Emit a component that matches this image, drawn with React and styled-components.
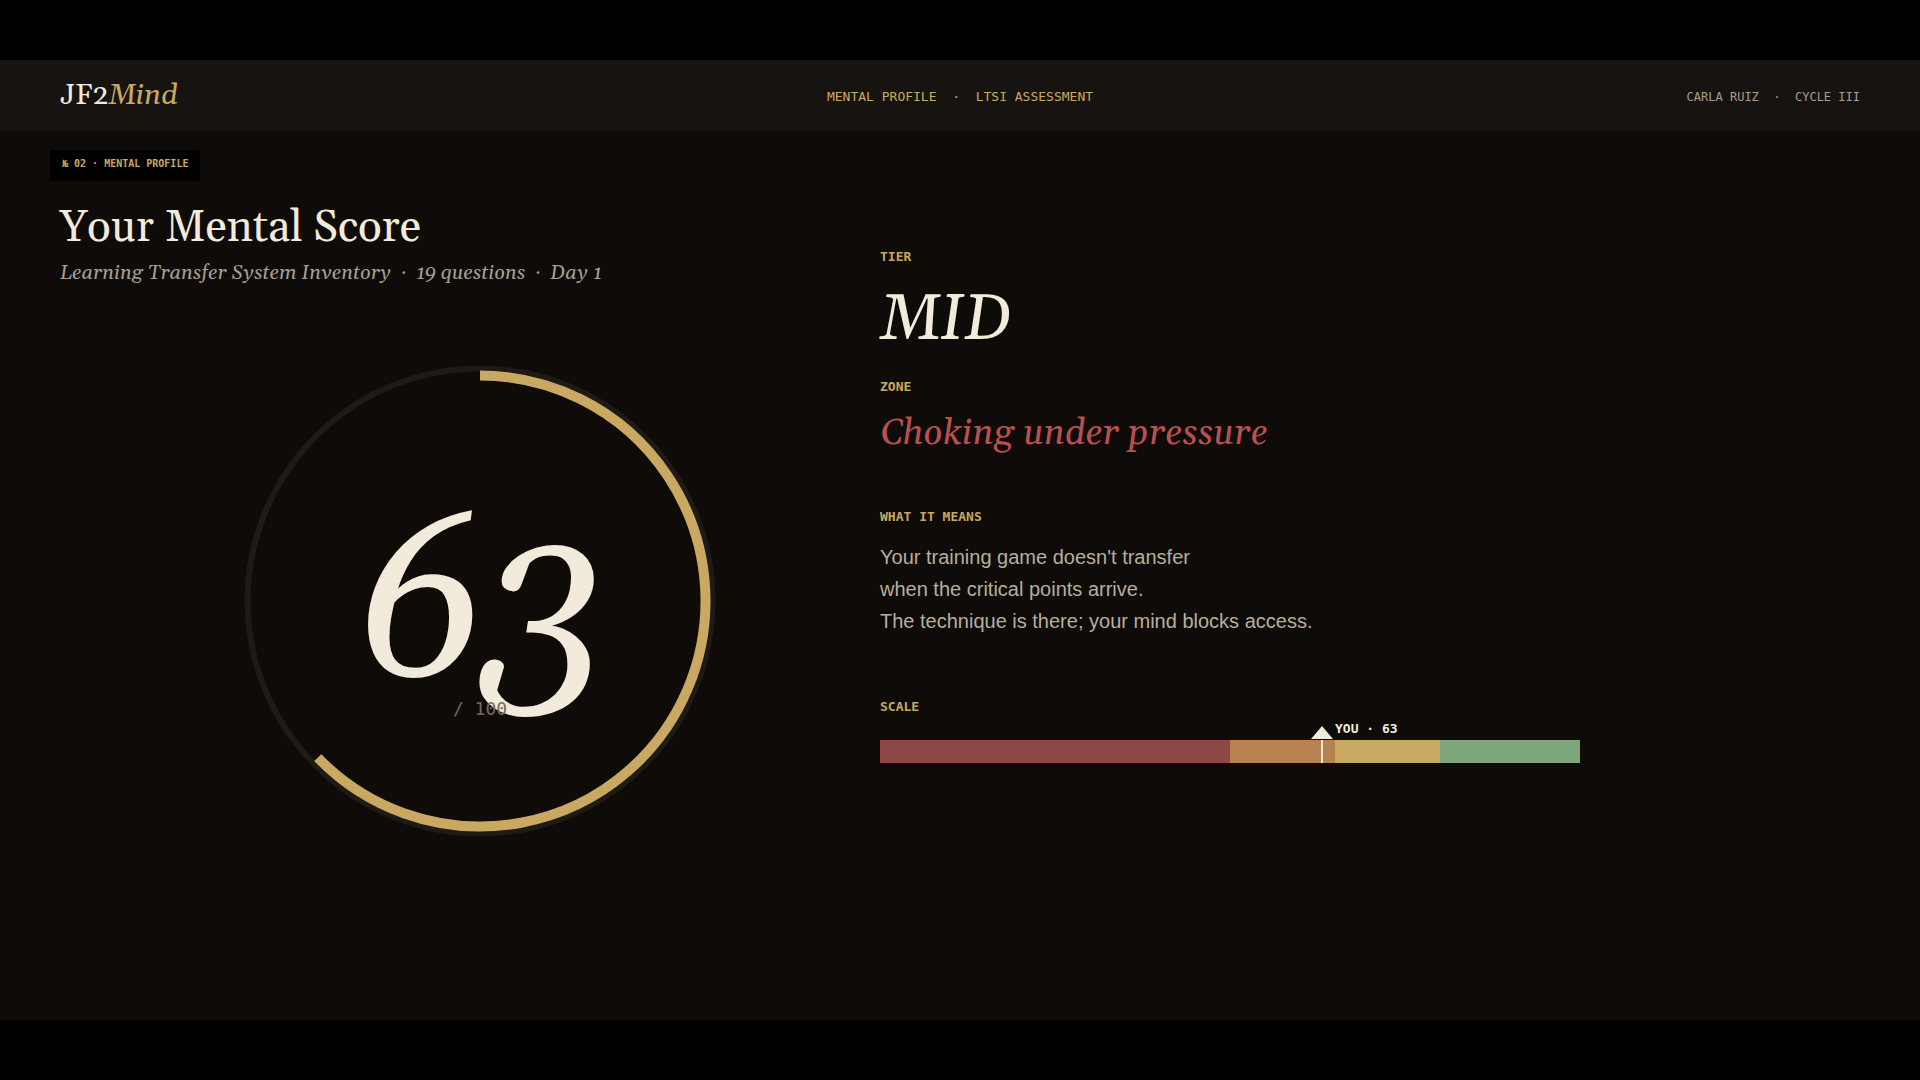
import styled, { createGlobalStyle } from "styled-components";

const SERIF = `Georgia, Gelasio, "Liberation Serif", serif`;
const MONO = `"DejaVu Sans Mono", "Liberation Mono", monospace`;
const SANS = `"Liberation Sans", Arial, sans-serif`;

const SCORE = 63;

// score bands, as a share of 100
const BANDS = [
  { name: "low", share: 50, color: "#8c4747" },
  { name: "mid", share: 15, color: "#b58250" },
  { name: "high", share: 15, color: "#c9a961" },
  { name: "elite", share: 20, color: "#7fa67b" },
];

export default function App() {
  return (
    <Page>
      <GlobalStyle />
      <Header>
        <Logo>
          JF2<em>Mind</em>
        </Logo>
        <Section>MENTAL PROFILE{"  ·  "}LTSI ASSESSMENT</Section>
        <Player>CARLA RUIZ{"  ·  "}CYCLE III</Player>
      </Header>
      <Main>
        <ScoreColumn>
          <Badge>№ 02 · MENTAL PROFILE</Badge>
          <Title>Your Mental Score</Title>
          <Subtitle>
            Learning Transfer System Inventory{"  ·  "}19 questions{"  ·  "}Day 1
          </Subtitle>
          <Gauge>
            <Ring />
            <Score>{SCORE}</Score>
            <OutOf>/ 100</OutOf>
          </Gauge>
        </ScoreColumn>
        <Details>
          <Label>TIER</Label>
          <Tier>MID</Tier>
          <Label>ZONE</Label>
          <Zone>Choking under pressure</Zone>
          <Label>WHAT IT MEANS</Label>
          <Meaning>
            Your training game doesn't transfer
            <br />
            when the critical points arrive.
            <br />
            The technique is there; your mind blocks access.
          </Meaning>
          <Label>SCALE</Label>
          <Scale>
            {BANDS.map((band) => (
              <Band key={band.name} $share={band.share} $color={band.color} />
            ))}
            <Marker style={{ left: `${SCORE}%` }}>
              <Arrow viewBox="0 0 22 13">
                <path d="M11 0L22 13H0Z" fill="#f2eadb" />
              </Arrow>
              <MarkerText>YOU · {SCORE}</MarkerText>
            </Marker>
          </Scale>
        </Details>
      </Main>
    </Page>
  );
}

function Ring() {
  // whole degrees, clockwise from the top
  const angle = (Math.floor(SCORE * 3.6) * Math.PI) / 180;
  const r = 225.5;
  const x = 236 + r * Math.sin(angle);
  const y = 236 - r * Math.cos(angle);

  return (
    <RingSvg viewBox="0 0 472 472">
      <circle cx="236" cy="236" r="232.5" fill="none" stroke="#1e1a16" strokeWidth="6" />
      <path
        d={`M236 ${236 - r}A${r} ${r} 0 ${SCORE > 50 ? 1 : 0} 1 ${x} ${y}`}
        fill="none"
        stroke="#c9a961"
        strokeWidth="10"
      />
    </RingSvg>
  );
}

// STYLES
const GlobalStyle = createGlobalStyle`
  * {
    box-sizing: border-box;
  }
  body {
    margin: 0;
    background-color: #000;
  }
  h1, h2, p {
    margin: 0;
    font-weight: normal;
  }
`;

const Page = styled.div`
  display: flex;
  flex-direction: column;
  min-height: 100vh;
  padding: 60px 0;
  color: #f2eadb;
`;

// HEADER
const Header = styled.header`
  display: grid;
  grid-template-columns: 1fr auto 1fr;
  align-items: center;
  height: 71px;
  padding: 0 60px;
  background-color: #171310;
`;

const Logo = styled.div`
  font: 29px/32px ${SERIF};
  em {
    color: #c9a961;
  }
`;

const Section = styled.p`
  padding-top: 2px;
  font: 13px/16px ${MONO};
  color: #c9a961;
  white-space: pre;
`;

const Player = styled.p`
  padding-top: 2px;
  font: 12px/16px ${MONO};
  color: #a89e8e;
  text-align: right;
  white-space: pre;
`;

// MAIN
const Main = styled.main`
  flex: 1;
  display: grid;
  grid-template-columns: 41fr 49fr;
  padding: 0 60px;
  background-color: #0e0b08;
`;

const ScoreColumn = styled.section`
  display: flex;
  flex-direction: column;
  align-items: flex-start;
  padding-top: 19px;
`;

const Badge = styled.div`
  height: 31px;
  margin-left: -10px;
  padding: 6px 12px;
  background-color: #000;
  font: bold 10px/16px ${MONO};
  color: #c9a961;
`;

const Title = styled.h1`
  margin-top: 21px;
  font: 44px/52px ${SERIF};
`;

const Subtitle = styled.p`
  margin-top: 5px;
  font: italic 20px/28px ${SERIF};
  color: #a89e8e;
  white-space: pre;
`;

const Gauge = styled.div`
  display: grid;
  justify-items: center;
  align-self: center;
  margin: 78px 0 0 20px;
  > * {
    grid-area: 1 / 1;
  }
`;

const RingSvg = styled.svg`
  width: 472px;
  height: 472px;
`;

const Score = styled.div`
  padding-top: 126px;
  font: italic 220px/240px ${SERIF};
`;

const OutOf = styled.div`
  padding-top: 332px;
  font: 18px/24px ${MONO};
  color: #736a5c;
`;

// DETAILS
const Details = styled.section`
  padding-top: 118px;
`;

const Label = styled.h2`
  font: bold 13px/16px ${MONO};
  color: #c9a961;
`;

const Tier = styled.p`
  margin: 19px 0 21px;
  font: italic 64px/74px ${SERIF};
`;

const Zone = styled.p`
  margin: 17px 0 53px;
  font: italic 36px/44px ${SERIF};
  color: #b85050;
`;

const Meaning = styled.p`
  margin: 16px 0 62px;
  font: 20px/32px ${SANS};
  color: #b8ae9e;
`;

const Scale = styled.div`
  position: relative;
  display: flex;
  max-width: 700px;
  height: 23px;
  margin-top: 25px;
`;

const Band = styled.div`
  flex: ${(props) => props.$share};
  background-color: ${(props) => props.$color};
`;

const Marker = styled.div`
  position: absolute;
  top: 0;
  width: 2px;
  height: 100%;
  background-color: #f2eadb;
`;

const Arrow = styled.svg`
  position: absolute;
  left: -10px;
  bottom: 24px;
  width: 22px;
  height: 13px;
`;

const MarkerText = styled.span`
  position: absolute;
  left: 14px;
  bottom: 26px;
  font: bold 13px/16px ${MONO};
  white-space: nowrap;
`;
